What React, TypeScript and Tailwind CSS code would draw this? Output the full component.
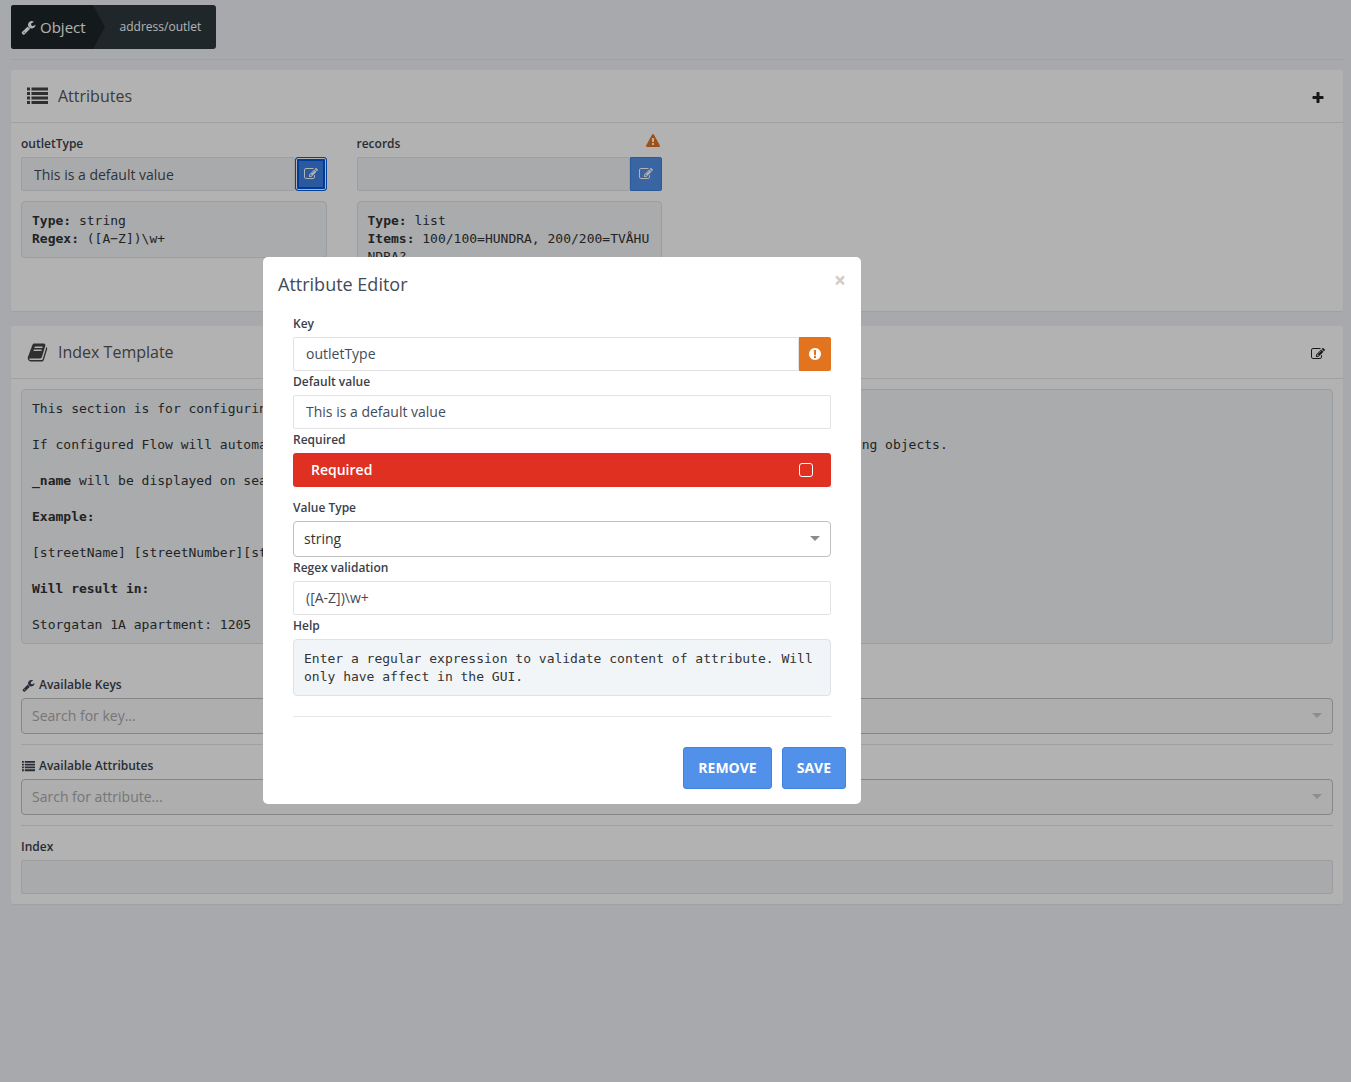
import type { ReactNode } from "react";

const paths = {
  edit: "M888 1184l116-116-152-152-116 116v56h96v96h56zm440-720q-16-16-33 1l-350 350q-17 17-1 33t33-1l350-350q17-17 1-33zm80 594v190q0 119-84.5 203.5t-203.5 84.5h-832q-119 0-203.5-84.5t-84.5-203.5v-832q0-119 84.5-203.5t203.5-84.5h832q63 0 117 25 15 7 18 23 3 17-9 29l-49 49q-14 14-32 8-23-6-45-6h-832q-66 0-113 47t-47 113v832q0 66 47 113t113 47h832q66 0 113-47t47-113v-126q0-13 9-22l64-64q15-15 35-7t20 29zm-96-738l288 288-672 672h-288v-288zm444 132l-92 92-288-288 92-92q28-28 68-28t68 28l152 152q28 28 28 68t-28 68z",
  wrench: "M448 1472q0-26-19-45t-45-19-45 19-19 45 19 45 45 19 45-19 19-45zm644-420l-682 682q-37 37-90 37-52 0-91-37l-106-108q-38-36-38-90 0-53 38-91l681-681q39 98 114.5 173.5t173.5 114.5zm634-435q0 39-23 106-47 134-164.5 217.5t-258.5 83.5q-185 0-316.5-131.5t-131.5-316.5 131.5-316.5 316.5-131.5q58 0 121.5 16.5t107.5 46.5q16 11 16 28t-16 28l-293 169v224l193 107q5-3 79-48.5t135.5-81 70.5-35.5q15 0 23.5 10t8.5 25z",
  list: "M0 128h256v256H0zM384 128h1408v256H384zM0 512h256v256H0zM384 512h1408v256H384zM0 896h256v256H0zM384 896h1408v256H384zM0 1280h256v256H0zM384 1280h1408v256H384z",
  book: "M1703 478q40 57 18 129l-275 906q-19 64-76.5 107.5t-122.5 43.5h-923q-77 0-148.5-53.5t-99.5-131.5q-24-67-2-127 0-4 3-27t4-37q1-8-3-21.5t-3-19.5q2-11 8-21t16.5-23.5 16.5-23.5q23-38 45-91.5t30-91.5q3-10 .5-30t-.5-28q3-11 17-28t17-23q21-36 42-92t25-90q1-9-2.5-32t.5-28q4-13 22-30.5t22-22.5q19-26 42.5-84.5t27.5-96.5q1-8-3-25.5t-2-26.5q2-8 9-18t18-23 17-21q8-12 16.5-30.5t15-35 16-36 19.5-32 26.5-23.5 36-11.5 47.5 5.5l-1 3q38-9 51-9h761q74 0 114 56t18 130l-274 906q-36 119-71.5 153.5t-128.5 34.5h-869q-27 0-38 15-11 16-1 43 24 70 144 70h923q29 0 56-15.5t35-41.5l300-987q7-22 5-57 38 15 59 43zm-1064 2q-4 13 2 22.5t20 9.5h608q13 0 25.5-9.5t16.5-22.5l21-64q4-13-2-22.5t-20-9.5h-608q-13 0-25.5 9.5t-16.5 22.5zm-83 256q-4 13 2 22.5t20 9.5h608q13 0 25.5-9.5t16.5-22.5l21-64q4-13-2-22.5t-20-9.5h-608q-13 0-25.5 9.5t-16.5 22.5z",
  plus: "M1600 736v192q0 40-28 68t-68 28h-416v416q0 40-28 68t-68 28h-192q-40 0-68-28t-28-68v-416h-416q-40 0-68-28t-28-68v-192q0-40 28-68t68-28h416v-416q0-40 28-68t68-28h192q40 0 68 28t28 68v416h416q40 0 68 28t28 68z",
  warning: "M1024 1375v-190q0-14-9.5-23.5t-22.5-9.5h-192q-13 0-22.5 9.5t-9.5 23.5v190q0 14 9.5 23.5t22.5 9.5h192q13 0 22.5-9.5t9.5-23.5zm-2-374l18-459q0-12-10-19-13-11-24-11h-220q-11 0-24 11-10 7-10 21l17 457q0 10 10 16.5t24 6.5h185q14 0 23.5-6.5t10.5-16.5zm-14-934l768 1408q35 63-2 126-17 29-46.5 46t-63.5 17h-1536q-34 0-63.5-17t-46.5-46q-37-63-2-126l768-1408q17-31 47-49t65-18 65 18 47 49z",
  alert: "M896 128q209 0 385.5 103t279.5 279.5 103 385.5-103 385.5-279.5 279.5-385.5 103-385.5-103-279.5-279.5-103-385.5 103-385.5 279.5-279.5 385.5-103zm128 1247v-190q0-14-9-23.5t-22-9.5h-192q-13 0-23 10t-10 23v190q0 13 10 23t23 10h192q13 0 22-9.5t9-23.5zm-2-344l18-621q0-12-10-18-10-8-24-8h-220q-14 0-24 8-10 6-10 18l17 621q0 10 10 17.5t24 7.5h185q14 0 23.5-7.5t10.5-17.5z",
};

const Icon = ({ name, className }: { name: keyof typeof paths; className: string }) => (
  <svg viewBox="0 0 1792 1792" fill="currentColor" aria-hidden="true" className={className}>
    <path d={paths[name]} />
  </svg>
);

const labelClass = "flex items-center gap-1 mb-[2px] text-xs leading-[22px] font-semibold text-[#3a414d]";
const inputClass = "block w-full min-w-0 h-[34px] px-3 pb-[2px] border border-[#e2e2e4] rounded-xs bg-white text-sm text-[#444b57] outline-none";
const mutedInputClass = "block w-full min-w-0 h-[34px] px-3 border border-[#e0e3e7] rounded-xs bg-[#f3f4f6] text-sm text-[#444b57] outline-none";

const Note = ({ children }: { children: ReactNode }) => (
  <pre className="px-[10px] pt-[10px] pb-[9px] border border-[#dde2e8] rounded bg-[#f2f5f8] font-['DejaVu_Sans_Mono',monospace] text-[13px] leading-[18px] text-[#333] whitespace-pre-wrap">
    {children}
  </pre>
);

const Arrow = ({ className }: { className: string }) => (
  <svg viewBox="0 0 10 5" fill="currentColor" aria-hidden="true" className={`absolute right-[11px] top-[15px] w-[10px] h-[5px] pointer-events-none ${className}`}>
    <path d="M0 0h10L5 5z" />
  </svg>
);

const Panel = ({ icon, title, action, children }: { icon: "list" | "book"; title: string; action: ReactNode; children: ReactNode }) => (
  <section className="mb-[15px] rounded-xs bg-white shadow-[0_1px_1px_rgba(0,0,0,0.05)]">
    <header className="flex items-center h-[53px] pl-4 pr-[18px] border-b border-[#e3e5e8]">
      <Icon name={icon} className="w-[21px] h-[21px] mr-[10px] text-[#444]" />
      <h2 className="grow text-base text-[#555]">{title}</h2>
      <div className="flex pt-1">{action}</div>
    </header>
    <div className="p-[10px]">{children}</div>
  </section>
);

const SearchSelect = ({ id, icon, label, placeholder }: { id: string; icon: "wrench" | "list"; label: string; placeholder: string }) => (
  <div className="pb-[10px] mb-[10px] border-b border-[#e5e5e5]">
    <label htmlFor={id} className={labelClass}>
      <Icon name={icon} className="w-[13px] h-[13px] ml-px" />
      {label}
    </label>
    <div className="relative">
      <select id={id} className="block w-full h-9 pl-[10px] border border-[#c0c0c0] rounded bg-[#f9f9f9] text-sm text-[#aaa] appearance-none">
        <option>{placeholder}</option>
      </select>
      <Arrow className="text-[#ccc]" />
    </div>
  </div>
);

const App = () => {
  return (
    <div className="min-h-screen bg-[#f1f2f7] pl-[11px] pr-2 pt-[5px] font-['Open_Sans',sans-serif]">
      {/* Breadcrumb */}
      <div className="pb-[10px] mb-[10px] border-b border-[#e6e7ec]">
        <nav className="flex w-fit h-11 rounded-[3px] overflow-hidden bg-[#2e393d] text-white">
          <a href="#object" className="flex items-center gap-1 pl-[10px] pr-[7px] bg-[#1d2528] text-[15px]">
            <Icon name="wrench" className="w-[15px] h-[15px]" />
            Object
          </a>
          <svg viewBox="0 0 12 44" aria-hidden="true" className="w-3 h-11">
            <path d="M0 0l12 22L0 44z" fill="#1d2528" />
          </svg>
          <a href="#outlet" className="flex items-center px-[15px] text-xs">address/outlet</a>
        </nav>
      </div>

      <Panel
        icon="list"
        title="Attributes"
        action={<button aria-label="Add attribute" className="text-[#222]"><Icon name="plus" className="w-[14px] h-[14px]" /></button>}
      >
        <div className="grid grid-cols-4 gap-x-[30px] min-h-[168px]">
          <div>
            <label htmlFor="outletType" className={labelClass}>outletType</label>
            <div className="flex mb-[10px]">
              <input id="outletType" className={mutedInputClass} defaultValue="This is a default value" readOnly />
              <button aria-label="Edit outletType" className="shrink-0 flex items-center justify-center w-8 h-[34px] border border-[#0a5fdc] rounded-[3px] bg-[#3d80e4] text-white shadow-[inset_0_0_0_1px_#fff,inset_0_0_0_3px_#0057d9]">
                <Icon name="edit" className="w-[14px] h-[14px]" />
              </button>
            </div>
            <Note><b>Type:</b> string{"\n"}<b>Regex:</b> ([A−Z])\w+</Note>
          </div>
          <div>
            <div className="flex justify-between">
              <label htmlFor="records" className={labelClass}>records</label>
              <Icon name="warning" className="w-[14px] h-[14px] mt-px mr-[2px] text-[#e2731f]" />
            </div>
            <div className="flex mb-[10px]">
              <input id="records" className={mutedInputClass} readOnly />
              <button aria-label="Edit records" className="shrink-0 flex items-center justify-center w-8 h-[34px] border border-[#3c82e0] rounded-r-xs bg-[#5291ea] text-white">
                <Icon name="edit" className="w-[14px] h-[14px]" />
              </button>
            </div>
            <Note><b>Type:</b> list{"\n"}<b>Items:</b> 100/100=HUNDRA, 200/200=TVÅHU{"\n"}NDRA?</Note>
          </div>
        </div>
      </Panel>

      <Panel
        icon="book"
        title="Index Template"
        action={<button aria-label="Edit template" className="text-[#222]"><Icon name="edit" className="w-[14px] h-[14px]" /></button>}
      >
        <div className="mb-[30px]">
          <Note>
            This section is for configuring index template.{"\n\n"}
            If configured Flow will automatically create an index from template, used for searching and listing existing objects.{"\n\n"}
            <b>_name</b> will be displayed on search.{"\n\n"}
            <b>Example:</b>{"\n\n"}
            [streetName] [streetNumber][streetLetter]{"\n\n"}
            <b>Will result in:</b>{"\n\n"}
            Storgatan 1A apartment: 1205
          </Note>
        </div>
        <SearchSelect id="keys" icon="wrench" label="Available Keys" placeholder="Search for key..." />
        <SearchSelect id="attributes" icon="list" label="Available Attributes" placeholder="Sarch for attribute..." />
        <label htmlFor="index" className={labelClass}>Index</label>
        <input id="index" className={mutedInputClass} readOnly />
      </Panel>

      {/* Modal */}
      <div className="fixed inset-0 bg-black/30 pl-[263px] pt-[257px]">
        <div role="dialog" aria-labelledby="editor-title" className="w-[598px] max-w-full p-[15px] rounded-[5px] bg-white">
          <div className="flex items-start justify-between mb-[17px]">
            <h4 id="editor-title" className="text-lg leading-6 text-[#444b57]">Attribute Editor</h4>
            <button aria-label="Close" className="text-[21px] leading-4 font-bold text-[#ccc]">×</button>
          </div>
          <div className="px-[15px]">
            <label htmlFor="key" className={labelClass}>Key</label>
            <div className="flex">
              <input id="key" className={inputClass} defaultValue="outletType" />
              <span className="shrink-0 flex items-center justify-center w-8 h-[34px] rounded-r-xs bg-[#e2731f] text-white">
                <Icon name="alert" className="w-[14px] h-[14px]" />
              </span>
            </div>
            <label htmlFor="default" className={labelClass}>Default value</label>
            <input id="default" className={inputClass} defaultValue="This is a default value" />
            <div className={labelClass}>Required</div>
            <label className="flex items-center justify-between h-[34px] mb-[10px] px-[18px] rounded-[3px] bg-[#e03021] text-sm font-semibold text-white">
              Required
              <input type="checkbox" className="w-[14px] h-[14px] border border-white rounded-[3px] appearance-none" />
            </label>
            <label htmlFor="type" className={labelClass}>Value Type</label>
            <div className="relative">
              <select id="type" className="block w-full h-9 pl-[10px] border border-[#c0c0c0] rounded bg-white text-sm text-[#333] appearance-none">
                <option>string</option>
              </select>
              <Arrow className="text-[#8c8c8c]" />
            </div>
            <label htmlFor="regex" className={labelClass}>Regex validation</label>
            <input id="regex" className={inputClass} defaultValue="([A-Z])\w+" />
            <div className={labelClass}>Help</div>
            <Note>Enter a regular expression to validate content of attribute. Will only have affect in the GUI.</Note>
            <hr className="mt-5 mb-[30px] border-[#e8e8e8]" />
          </div>
          <div className="flex justify-end gap-[10px]">
            <button className="h-[42px] px-[14px] border border-[#3c82e0] rounded-[3px] bg-[#5291ea] text-sm font-bold text-white">REMOVE</button>
            <button className="h-[42px] px-[14px] border border-[#3c82e0] rounded-[3px] bg-[#5291ea] text-sm font-bold text-white">SAVE</button>
          </div>
        </div>
      </div>
    </div>
  );
};

export default App;
